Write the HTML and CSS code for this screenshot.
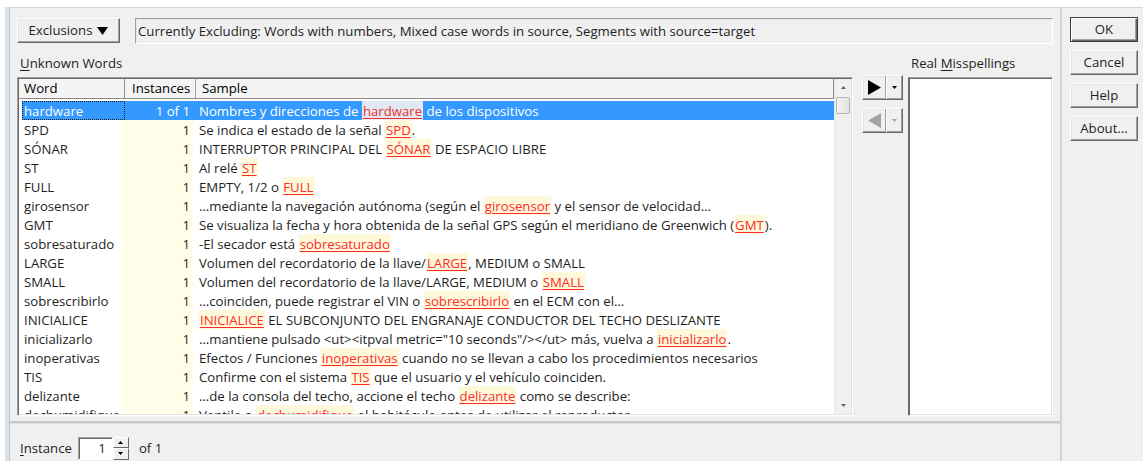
FILE: index.html
```html
<!DOCTYPE html>
<html lang="es">
<head>
<meta charset="utf-8">
<title>Spelling</title>
<link rel="stylesheet" href="styles.css">
</head>
<body>
<div class="window">
  <div class="edge"></div>
  <div class="dialog">
    <div class="main">
      <div class="upper">
        <div class="toolbar">
          <div class="btn excl">Exclusions
            <svg class="excl-arrow" width="11" height="8" viewBox="0 0 11 8"><polygon points="0,0 11,0 5.5,8" fill="#000"/></svg>
          </div>
          <div class="status">Currently Excluding: Words with numbers, Mixed case words in source, Segments with source=target</div>
        </div>
        <div class="panes">
          <div class="label"><u>U</u>nknown Words</div>
          <div></div>
          <div class="label">Real <u>M</u>isspellings</div>

          <div class="table">
            <div class="listview">
              <div class="head">
                <div class="hcell c-word">Word</div>
                <div class="hcell c-inst">Instances</div>
                <div class="hcell c-sample">Sample</div>
              </div>
              <div class="body">
                <div class="row selected">
                  <div class="cell word focus">hardware</div>
                  <div class="cell inst">1 of 1</div>
                  <div class="cell sample">Nombres y direcciones de <span class="hit">hardware</span> de los dispositivos</div>
                </div>
                <div class="row">
                  <div class="cell word">SPD</div><div class="cell inst">1</div>
                  <div class="cell sample">Se indica el estado de la señal <span class="hit">SPD</span>.</div>
                </div>
                <div class="row">
                  <div class="cell word">SÓNAR</div><div class="cell inst">1</div>
                  <div class="cell sample">INTERRUPTOR PRINCIPAL DEL <span class="hit">SÓNAR</span> DE ESPACIO LIBRE</div>
                </div>
                <div class="row">
                  <div class="cell word">ST</div><div class="cell inst">1</div>
                  <div class="cell sample">Al relé <span class="hit">ST</span></div>
                </div>
                <div class="row">
                  <div class="cell word">FULL</div><div class="cell inst">1</div>
                  <div class="cell sample">EMPTY, 1/2 o <span class="hit">FULL</span></div>
                </div>
                <div class="row">
                  <div class="cell word">girosensor</div><div class="cell inst">1</div>
                  <div class="cell sample">…mediante la navegación autónoma (según el <span class="hit">girosensor</span> y el sensor de velocidad…</div>
                </div>
                <div class="row">
                  <div class="cell word">GMT</div><div class="cell inst">1</div>
                  <div class="cell sample">Se visualiza la fecha y hora obtenida de la señal GPS según el meridiano de Greenwich (<span class="hit">GMT</span>).</div>
                </div>
                <div class="row">
                  <div class="cell word">sobresaturado</div><div class="cell inst">1</div>
                  <div class="cell sample">-El secador está <span class="hit">sobresaturado</span></div>
                </div>
                <div class="row">
                  <div class="cell word">LARGE</div><div class="cell inst">1</div>
                  <div class="cell sample">Volumen del recordatorio de la llave/<span class="hit">LARGE</span>, MEDIUM o SMALL</div>
                </div>
                <div class="row">
                  <div class="cell word">SMALL</div><div class="cell inst">1</div>
                  <div class="cell sample">Volumen del recordatorio de la llave/LARGE, MEDIUM o <span class="hit">SMALL</span></div>
                </div>
                <div class="row">
                  <div class="cell word">sobrescribirlo</div><div class="cell inst">1</div>
                  <div class="cell sample">…coinciden, puede registrar el VIN o <span class="hit">sobrescribirlo</span> en el ECM con el…</div>
                </div>
                <div class="row">
                  <div class="cell word">INICIALICE</div><div class="cell inst">1</div>
                  <div class="cell sample"><span class="hit">INICIALICE</span> EL SUBCONJUNTO DEL ENGRANAJE CONDUCTOR DEL TECHO DESLIZANTE</div>
                </div>
                <div class="row">
                  <div class="cell word">inicializarlo</div><div class="cell inst">1</div>
                  <div class="cell sample">…mantiene pulsado &lt;ut&gt;&lt;itpval metric="10 seconds"/&gt;&lt;/ut&gt; más, vuelva a <span class="hit">inicializarlo</span>.</div>
                </div>
                <div class="row">
                  <div class="cell word">inoperativas</div><div class="cell inst">1</div>
                  <div class="cell sample">Efectos / Funciones <span class="hit">inoperativas</span> cuando no se llevan a cabo los procedimientos necesarios</div>
                </div>
                <div class="row">
                  <div class="cell word">TIS</div><div class="cell inst">1</div>
                  <div class="cell sample">Confirme con el sistema <span class="hit">TIS</span> que el usuario y el vehículo coinciden.</div>
                </div>
                <div class="row">
                  <div class="cell word">delizante</div><div class="cell inst">1</div>
                  <div class="cell sample">…de la consola del techo, accione el techo <span class="hit">delizante</span> como se describe:</div>
                </div>
                <div class="row">
                  <div class="cell word">dechumidifique</div><div class="cell inst">1</div>
                  <div class="cell sample">Ventile o <span class="hit">dechumidifique</span> el habitáculo antes de utilizar el reproductor</div>
                </div>
              </div>
            </div>
            <div class="vscroll">
              <div class="sb-arrow">
                <svg width="5" height="3" viewBox="0 0 5 3"><polygon points="0,3 5,3 2.5,0" fill="#606060"/></svg>
              </div>
              <div class="sb-thumb"></div>
              <div class="sb-track"></div>
              <div class="sb-arrow">
                <svg width="5" height="3" viewBox="0 0 5 3"><polygon points="0,0 5,0 2.5,3" fill="#606060"/></svg>
              </div>
            </div>
          </div>

          <div class="movers">
            <div class="btn split">
              <div class="split-main">
                <svg width="13" height="15" viewBox="0 0 13 15"><polygon points="0,0 13,7.5 0,15" fill="#000"/></svg>
              </div>
              <div class="split-drop">
                <svg width="5" height="3" viewBox="0 0 5 3"><polygon points="0,0 5,0 2.5,3" fill="#000"/></svg>
              </div>
            </div>
            <div class="btn split disabled">
              <div class="split-main">
                <svg width="13" height="15" viewBox="0 0 13 15"><polygon points="13,0 0,7.5 13,15" fill="#a3a3a3"/></svg>
              </div>
              <div class="split-drop">
                <svg width="5" height="3" viewBox="0 0 5 3"><polygon points="0,0 5,0 2.5,3" fill="#a3a3a3"/></svg>
              </div>
            </div>
          </div>

          <div class="listbox"></div>
        </div>
      </div>

      <div class="footer">
        <span class="foot-label"><u>I</u>nstance</span>
        <div class="spin">
          <div class="spin-field">1</div>
          <div class="spin-buttons">
            <div class="spin-btn">
              <svg width="5" height="3" viewBox="0 0 5 3"><polygon points="0,3 5,3 2.5,0" fill="#000"/></svg>
            </div>
            <div class="spin-btn">
              <svg width="5" height="3" viewBox="0 0 5 3"><polygon points="0,0 5,0 2.5,3" fill="#000"/></svg>
            </div>
          </div>
        </div>
        <span class="foot-of">of 1</span>
      </div>
    </div>

    <div class="side">
      <div class="btn side-btn default">OK</div>
      <div class="btn side-btn">Cancel</div>
      <div class="btn side-btn">Help</div>
      <div class="btn side-btn">About...</div>
    </div>
  </div>
</div>
</body>
</html>
```

FILE: styles.css
```css
* { box-sizing: border-box; }

html, body { margin: 0; padding: 0; }

body {
  width: 1143px;
  height: 461px;
  overflow: hidden;
  background: #fff;
  font-family: "Open Sans", "Noto Sans", sans-serif;
  font-size: 13.2px;
  color: #1e1e1e;
}

u { text-decoration: underline; text-underline-offset: 2px; }

.window { display: flex; height: 461px; }

/* window frame strip on the left */
.edge {
  width: 10px;
  flex: none;
  margin-top: 7px;
  background: linear-gradient(to right, #fff 0 5px, #d9e2ec 5px 9px, #c4c4c4 9px 10px);
}

.dialog {
  flex: 1;
  display: flex;
  margin-top: 7px;
  border-top: 1px solid #d6d6d6;
  background: #f0f0f0;
}

.main {
  width: 1050px;
  flex: none;
  display: flex;
  flex-direction: column;
}

.upper {
  flex: 1;
  padding: 10px 7px 0 7px;
}

/* classic raised button */
.btn {
  background: #f0f0f0;
  border: 1px solid;
  border-color: #fff #696969 #696969 #fff;
  box-shadow: inset -1px -1px #a0a0a0, inset 1px 1px #e3e3e3;
  display: flex;
  align-items: center;
  justify-content: center;
  color: #1e1e1e;
}

.toolbar {
  display: flex;
  gap: 15px;
  height: 26px;
}

.excl {
  width: 103px;
  height: 25px;
  gap: 5px;
  padding-bottom: 1px;
}

.excl-arrow { margin-top: 1px; }

.status {
  flex: 1;
  height: 26px;
  line-height: 24px;
  padding-left: 2px;
  border: 1px solid;
  border-color: #a0a0a0 #fff #fff #a0a0a0;
  box-shadow: inset 1px 1px #e6e6e6;
  white-space: nowrap;
}

.panes {
  display: grid;
  grid-template-columns: 836px 55px 145px;
  grid-template-rows: 33px 339px;
}

.label {
  align-self: end;
  line-height: 16px;
  margin-bottom: 6px;
  padding-left: 3px;
}

/* sunken list view */
.table {
  display: flex;
  background: #fff;
  border: 1px solid;
  border-color: #a0a0a0 #fff #fff #a0a0a0;
  box-shadow: inset 1px 1px #696969, inset -1px -1px #e3e3e3;
  padding: 1px;
  overflow: hidden;
}

.listview {
  flex: 1;
  display: flex;
  flex-direction: column;
  overflow: hidden;
}

.head {
  display: grid;
  grid-template-columns: 106px 71px 1fr;
  height: 20px;
  background: #f4f4f4;
  border-bottom: 1px solid #8c8c8c;
  border-right: 1px solid #8c8c8c;
}

.hcell {
  line-height: 19px;
  color: #000;
  white-space: nowrap;
}

.hcell.c-word { padding-left: 5px; border-right: 1px solid #8c8c8c; }
.hcell.c-inst { padding-left: 7px; border-right: 1px solid #a0a0a0; }
.hcell.c-sample { padding-left: 6px; }

.body {
  flex: 1;
  overflow: hidden;
  padding: 2px 0 0 3px;
  background: linear-gradient(to right, #fff 0 103px, #fefee9 103px 174px, #fff 174px);
}

.row {
  display: grid;
  grid-template-columns: 103px 71px 1fr;
  height: 19px;
  line-height: 19px;
  white-space: nowrap;
}

.cell { overflow: hidden; padding-top: 1px; }
.cell.word { padding-left: 2px; }
.cell.inst { text-align: right; padding-right: 6px; }
.cell.sample { padding-left: 3px; }

.row.selected .cell { background: #3399ff; color: #fff; }
.row.selected .focus { outline: 1px dotted #1c1c1c; outline-offset: -1px; }

.hit {
  color: #ff2a2a;
  text-decoration: underline;
  text-underline-offset: 2px;
  background: #fff9dc;
  padding: 1px 1px;
}

.row.selected .hit { background: #e1e8f1; color: #f03030; }

/* vertical scroll bar */
.vscroll {
  width: 17px;
  flex: none;
  display: flex;
  flex-direction: column;
  background: #f0f0f0;
  border-left: 1px solid #e6e6e6;
}

.sb-arrow {
  height: 17px;
  display: flex;
  align-items: center;
  justify-content: center;
}

.sb-thumb {
  height: 17px;
  margin: 1px 1px 0 1px;
  background: linear-gradient(to right, #f2f2f2, #e2e2e2);
  border: 1px solid #b4b4b4;
  border-radius: 2px;
}

.sb-track { flex: 1; }

/* move buttons between the lists */
.movers {
  display: flex;
  flex-direction: column;
  gap: 8px;
  padding-left: 9px;
  margin-top: -2px;
}

.split {
  width: 41px;
  height: 25px;
  justify-content: flex-start;
  align-items: stretch;
}

.split-main {
  width: 23px;
  display: flex;
  align-items: center;
  justify-content: center;
  border-right: 1px solid #a0a0a0;
  box-shadow: 1px 0 #fff;
  padding-left: 1px;
}

.split-drop {
  flex: 1;
  display: flex;
  align-items: center;
  justify-content: center;
  padding-left: 1px;
}

.listbox {
  background: #fff;
  border: 1px solid;
  border-color: #a0a0a0 #fff #fff #696969;
  box-shadow: inset 1px 1px #696969, inset -1px -1px #e3e3e3;
}

/* bottom bar with the instance selector */
.footer {
  height: 40px;
  flex: none;
  border-top: 2px solid #c9c9c9;
  box-shadow: inset 0 1px #dedede;
  display: flex;
  align-items: center;
  padding: 12px 0 0 10px;
}

.foot-label { margin-right: 6px; }

.spin { display: flex; height: 23px; }

.spin-field {
  width: 35px;
  background: #fff;
  text-align: right;
  padding-right: 6px;
  line-height: 21px;
  border: 1px solid;
  border-color: #a0a0a0 #fff #fff #a0a0a0;
  box-shadow: inset 1px 1px #696969;
}

.spin-buttons {
  width: 16px;
  display: flex;
  flex-direction: column;
}

.spin-btn {
  flex: 1;
  display: flex;
  align-items: center;
  justify-content: center;
  background: #f0f0f0;
  border: 1px solid;
  border-color: #fff #696969 #696969 #fff;
}

.foot-of { margin-left: 10px; }

/* right-hand command buttons */
.side {
  flex: 1;
  border-left: 2px solid #d2d2d2;
  display: flex;
  flex-direction: column;
  gap: 8px;
  padding: 9px 0 0 8px;
}

.side-btn {
  width: 68px;
  height: 25px;
  padding-bottom: 1px;
}

.side-btn.default {
  border: 1px solid #3c3c3c;
  box-shadow: inset 1px 1px #fff, inset -1px -1px #696969, inset -2px -2px #a0a0a0;
}
```
